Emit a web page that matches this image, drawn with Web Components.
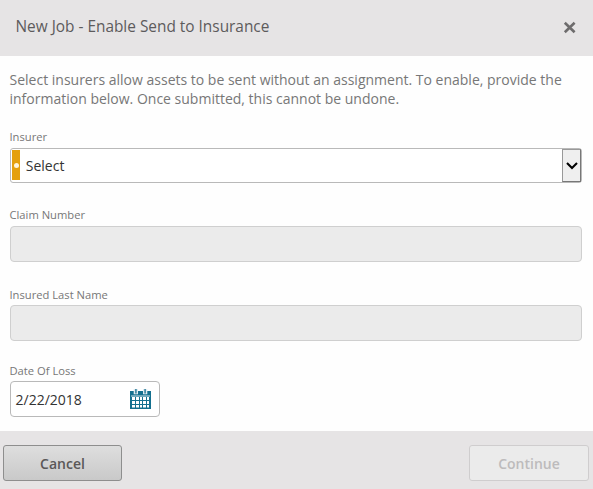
<!DOCTYPE html>
<html lang="en">
<head>
<meta charset="utf-8">
<title>New Job - Enable Send to Insurance</title>
<style>
html,body{margin:0;height:100%;overflow:hidden}
body{font-family:"Open Sans","Noto Sans",sans-serif;background:#fefefe}
</style>
</head>
<body>
<job-dialog>
  <span slot="title">New Job - Enable Send to Insurance</span>
  <dialog-note>Select insurers allow assets to be sent without an assignment. To enable, provide the<br>information below. Once submitted, this cannot be undone.</dialog-note>
  <form-field label="Insurer" style="--top:21px;--gap:3px"><select-box>Select</select-box></form-field>
  <form-field label="Claim Number" style="--top:24px;--gap:3px"><text-box disabled></text-box></form-field>
  <form-field label="Insured Last Name" style="--top:25px;--gap:2px"><text-box disabled></text-box></form-field>
  <form-field label="Date Of Loss" style="--top:22px;--gap:2px"><text-box date>2/22/2018</text-box></form-field>
  <push-button slot="actions">Cancel</push-button>
  <push-button slot="actions" disabled>Continue</push-button>
</job-dialog>
<script>
const define = (name, html) => customElements.define(name, class extends HTMLElement {
  constructor() {
    super();
    this.attachShadow({ mode: 'open' }).innerHTML =
      html.replace('{label}', this.getAttribute('label') || '');
  }
});

define('job-dialog', `<style>
:host{display:flex;flex-direction:column;width:593px;height:489px;box-sizing:border-box;background:#fefefe}
header{height:56px;flex:none;box-sizing:border-box;padding:0 17px 3px 15.5px;background:#e6e4e5;display:flex;align-items:center;justify-content:space-between;color:#5d5b5c;font-size:15.4px;line-height:21px}
main{flex:1;padding:14px 11px 0 10px}
footer{height:58px;flex:none;box-sizing:border-box;background:#e6e4e5;display:flex;justify-content:space-between;padding:14px 4px 8px 3px}
svg{display:block;margin-top:2px}
</style>
<header><slot name="title"></slot><svg width="13" height="13" viewBox="0 0 13 13"><path d="M1.8 1.8 11.6 11.2M11.6 1.8 1.8 11.2" stroke="#6e6c6d" stroke-width="2.6"/></svg></header>
<main><slot></slot></main>
<footer><slot name="actions"></slot></footer>`);

define('dialog-note', `<style>
:host{display:block;font-size:14px;line-height:19px;color:#777;white-space:nowrap;margin-left:-.5px}
</style><slot></slot>`);

define('form-field', `<style>
:host{display:block;padding-top:var(--top)}
label{display:block;font-size:11.2px;line-height:16px;color:#777;margin:0 0 var(--gap) -.5px}
</style><label>{label}</label><slot></slot>`);

define('select-box', `<style>
:host{display:flex;box-sizing:border-box;width:572px;height:35px;border:1px solid #b9b9b9;border-radius:3px;background:#fff;font-size:14px;line-height:33px;color:#333}
.mark{width:8px;height:30px;margin:1px 5.4px 0 1.4px;background:#e5a00d;display:flex;align-items:center;justify-content:center}
.mark i{width:5px;height:5px;border-radius:50%;background:#fff4da}
.arrow{margin:0 0 0 auto;width:19px;height:33px;box-sizing:border-box;border:1px solid;border-color:#999 #777 #777 #999;background:#efefef;display:flex;align-items:center;justify-content:center}
</style><span class="mark"><i></i></span><slot></slot>
<span class="arrow"><svg width="12" height="8" viewBox="0 0 12 8"><path d="M1 1 6 6 11 1" fill="none" stroke="#000" stroke-width="2.1"/></svg></span>`);

define('text-box', `<style>
:host{display:flex;align-items:center;box-sizing:border-box;width:572px;height:36px;border:1px solid #cfcfcf;border-radius:4px;background:#ebebeb;font-size:14px;color:#333}
:host([date]){width:150px;background:#fff;border-color:#b9b9b9;padding:0 8px 0 4.5px;justify-content:space-between}
svg{display:none}
:host([date]) svg{display:block}
</style><slot></slot>
<svg width="21" height="20" viewBox="0 0 21 20"><path d="M0 2H21V20H0Z" fill="#14708f"/><path d="M1 7H20" stroke="#fff" stroke-width=".8"/>
<path d="M3.7 0H8V5.3H3.7ZM13 0H17.3V5.3H13Z" fill="#dfeaf0"/><path d="M5 0H6.8V4.5H5ZM14.2 0H16V4.5H14.2Z" fill="#4b8fa8"/>
<path d="M2 8H5V11H2ZM6 8H9V11H6ZM10 8H12V11H10ZM13 8H16V11H13ZM17 8H19V11H17ZM2 12H5V15H2ZM6 12H9V15H6ZM10 12H12V15H10ZM13 12H16V15H13ZM17 12H19V15H17ZM2 16H5V18.5H2ZM6 16H9V18.5H6ZM10 16H12V18.5H10ZM13 16H16V18.5H13ZM17 16H19V18.5H17Z" fill="#fff"/></svg>`);

define('push-button', `<style>
:host{display:flex;align-items:center;justify-content:center;box-sizing:border-box;width:119px;height:36px;border:1px solid #8e8e8e;border-radius:3px;background:linear-gradient(#dedede,#c9c9c9);font-size:14px;font-weight:600;color:#5a5858}
:host([disabled]){width:120px;background:#ebebeb;border-color:#cfcdce;color:#bdbbbc}
</style><slot></slot>`);
</script>
</body>
</html>
